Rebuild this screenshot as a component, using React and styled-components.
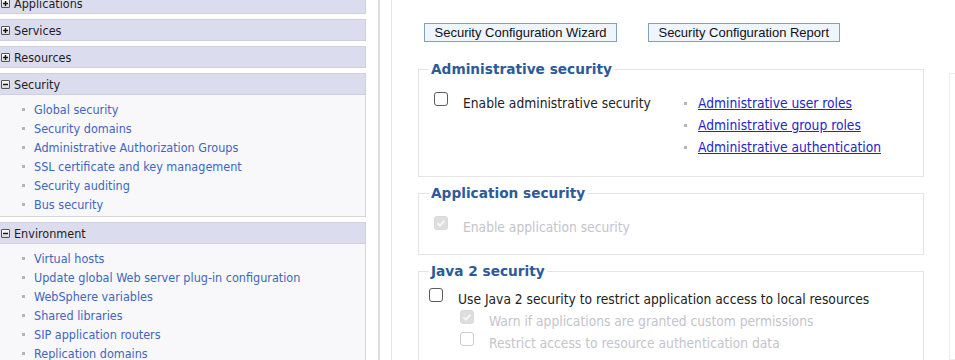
import { createGlobalStyle, styled } from "styled-components";

const GlobalStyle = createGlobalStyle`
    html, body {
        margin: 0;
        padding: 0;
        background: #ffffff;
        overflow: hidden;
    }
    body {
        font-family: "DejaVu Sans Condensed", "DejaVu Sans", Verdana, sans-serif;
        color: #222222;
    }
`;

const navGroups = [
    { title: "Applications", open: false },
    { title: "Services", open: false },
    { title: "Resources", open: false },
    {
        title: "Security",
        open: true,
        items: [
            "Global security",
            "Security domains",
            "Administrative Authorization Groups",
            "SSL certificate and key management",
            "Security auditing",
            "Bus security",
        ],
    },
    {
        title: "Environment",
        open: true,
        items: [
            "Virtual hosts",
            "Update global Web server plug-in configuration",
            "WebSphere variables",
            "Shared libraries",
            "SIP application routers",
            "Replication domains",
        ],
    },
];

const adminLinks = [
    "Administrative user roles",
    "Administrative group roles",
    "Administrative authentication",
];

function Toggle({ open }) {
    return (
        <ToggleBox>
            <svg width="7" height="7" viewBox="0 0 7 7">
                <path d="M1 3.5h5" stroke="#111" strokeWidth="1.4" />
                {!open && <path d="M3.5 1v5" stroke="#111" strokeWidth="1.4" />}
            </svg>
        </ToggleBox>
    );
}

function Checkbox({ checked, disabled }) {
    return (
        <Box $checked={checked} $disabled={disabled}>
            {checked && (
                <svg width="12" height="12" viewBox="0 0 12 12">
                    <path
                        d="M2.5 6.2l2.4 2.4 4.6-5"
                        fill="none"
                        stroke="#f7f7f7"
                        strokeWidth="2"
                    />
                </svg>
            )}
        </Box>
    );
}

export default function App() {
    return (
        <>
            <GlobalStyle />
            <Page>
                <Sidebar>
                    {navGroups.map((group) => (
                        <NavGroup key={group.title}>
                            <NavHeader>
                                <Toggle open={group.open} />
                                {group.title}
                            </NavHeader>
                            {group.open && (
                                <NavBody>
                                    {group.items.map((item) => (
                                        <NavItem key={item}>{item}</NavItem>
                                    ))}
                                </NavBody>
                            )}
                        </NavGroup>
                    ))}
                </Sidebar>
                <Splitter />
                <Main>
                    <Content>
                        <ButtonRow>
                            <Button>Security Configuration Wizard</Button>
                            <Button>Security Configuration Report</Button>
                        </ButtonRow>

                        <Fieldset>
                            <Legend>Administrative security</Legend>
                            <AdminRow>
                                <CheckRow $width="250px">
                                    <Checkbox />
                                    <Label>Enable administrative security</Label>
                                </CheckRow>
                                <LinkList>
                                    {adminLinks.map((link) => (
                                        <LinkItem key={link}>
                                            <a href="#">{link}</a>
                                        </LinkItem>
                                    ))}
                                </LinkList>
                            </AdminRow>
                        </Fieldset>

                        <Fieldset>
                            <Legend>Application security</Legend>
                            <Block $indent="15px" $top="14px" $bottom="16px">
                                <CheckRow>
                                    <Checkbox checked disabled />
                                    <Label $disabled>Enable application security</Label>
                                </CheckRow>
                            </Block>
                        </Fieldset>

                        <Fieldset>
                            <Legend>Java 2 security</Legend>
                            <Block $indent="10px" $top="8px" $bottom="10px">
                                <CheckRow>
                                    <Checkbox />
                                    <Label>
                                        Use Java 2 security to restrict application access to local resources
                                    </Label>
                                </CheckRow>
                                <SubOptions>
                                    <CheckRow>
                                        <Checkbox checked disabled />
                                        <Label $disabled>
                                            Warn if applications are granted custom permissions
                                        </Label>
                                    </CheckRow>
                                    <CheckRow>
                                        <Checkbox disabled />
                                        <Label $disabled>
                                            Restrict access to resource authentication data
                                        </Label>
                                    </CheckRow>
                                </SubOptions>
                            </Block>
                        </Fieldset>
                    </Content>
                    <SidePanel />
                </Main>
            </Page>
        </>
    );
}

const Page = styled.div`
    display: flex;
    height: 360px;
    overflow: hidden;
`;

const Sidebar = styled.nav`
    width: 368px;
    flex: none;
    margin-left: -2px;
    margin-top: -8px;
    display: flex;
    flex-direction: column;
    gap: 5px;
`;

const NavGroup = styled.div`
    display: flex;
    flex-direction: column;
`;

const NavHeader = styled.div`
    height: 22px;
    box-sizing: border-box;
    display: flex;
    align-items: center;
    gap: 4px;
    padding-left: 2px;
    background: #dcdcef;
    border: 1px solid #cfcfe0;
    font-size: 12.5px;
    color: #1e1e1e;
`;

const ToggleBox = styled.span`
    width: 9px;
    height: 9px;
    box-sizing: border-box;
    border: 1px solid #555;
    border-radius: 1px;
    background: linear-gradient(#ffffff, #d8d8d8);
    display: flex;
    align-items: center;
    justify-content: center;
    margin-top: 1px;
`;

const NavBody = styled.ul`
    margin: 0;
    list-style: none;
    padding: 5px 0 2px 0;
    background: #f8f7fa;
    border: 1px solid #d6d6d6;
    border-top: none;
`;

const NavItem = styled.li`
    position: relative;
    line-height: 19px;
    padding-left: 35px;
    font-size: 12.5px;
    color: #4066c0;

    &::before {
        content: "";
        position: absolute;
        left: 23px;
        top: 8px;
        width: 3px;
        height: 3px;
        background: #b4b4bc;
    }
`;

const Splitter = styled.div`
    flex: none;
    width: 11px;
    margin-left: 12px;
    border-left: 2px solid #dcdcdc;
    border-right: 1px solid #e6e6e6;
`;

const Main = styled.main`
    flex: 1;
    display: flex;
    overflow: hidden;
`;

const Content = styled.div`
    flex: none;
    width: 506px;
    padding: 23px 0 0 26px;
    display: flex;
    flex-direction: column;
    gap: 8px;
`;

const ButtonRow = styled.div`
    display: flex;
    gap: 31px;
    padding-left: 6px;
    margin-bottom: 11px;
`;

const Button = styled.button`
    height: 19px;
    padding: 0 9.5px;
    background: #eef5fd;
    border: 1px solid #7f9fc8;
    border-radius: 0;
    font-family: "Liberation Sans", Arial, sans-serif;
    font-size: 13px;
    line-height: 17px;
    color: #111;
`;

const Fieldset = styled.fieldset`
    margin: 0;
    padding: 0;
    border: 1px solid #e4e4e4;
    min-inline-size: 0;
`;

const Legend = styled.legend`
    margin-left: 10px;
    padding: 0 2px;
    font-family: "DejaVu Sans", Verdana, sans-serif;
    font-size: 13.7px;
    line-height: 17px;
    font-weight: bold;
    color: #2d5a98;
`;

const AdminRow = styled.div`
    display: flex;
    padding: 14px 0 18px 15px;
`;

const Block = styled.div`
    display: flex;
    flex-direction: column;
    padding: ${(p) => p.$top} 0 ${(p) => p.$bottom} ${(p) => p.$indent};
`;

const CheckRow = styled.div`
    display: flex;
    align-items: flex-start;
    gap: 15px;
    width: ${(p) => p.$width || "auto"};
    line-height: 22px;
`;

const Box = styled.span`
    flex: none;
    width: 14px;
    height: 14px;
    box-sizing: border-box;
    border-radius: 3px;
    display: flex;
    align-items: center;
    justify-content: center;
    border: 1.5px solid ${(p) => (p.$disabled ? (p.$checked ? "#d9d9d9" : "#cdcdcd") : "#5c5c5c")};
    background: ${(p) => (p.$checked ? "#dedede" : "#ffffff")};
`;

const Label = styled.span`
    font-size: 13.7px;
    color: ${(p) => (p.$disabled ? "#c4c4cc" : "#222222")};
`;

const SubOptions = styled.div`
    display: flex;
    flex-direction: column;
    padding-left: 31px;
`;

const LinkList = styled.ul`
    margin: 0;
    padding: 0;
    list-style: none;
`;

const LinkItem = styled.li`
    position: relative;
    padding-left: 14px;
    line-height: 22px;
    font-size: 13.7px;

    &::before {
        content: "";
        position: absolute;
        left: 0;
        top: 10px;
        width: 3px;
        height: 3px;
        background: #b4b4bc;
    }

    a {
        color: #2424c8;
        text-decoration: underline;
    }
`;

const SidePanel = styled.div`
    flex: 1;
    min-width: 40px;
    margin: 73px -20px 0 25px;
    border: 1px solid #ededed;
`;
